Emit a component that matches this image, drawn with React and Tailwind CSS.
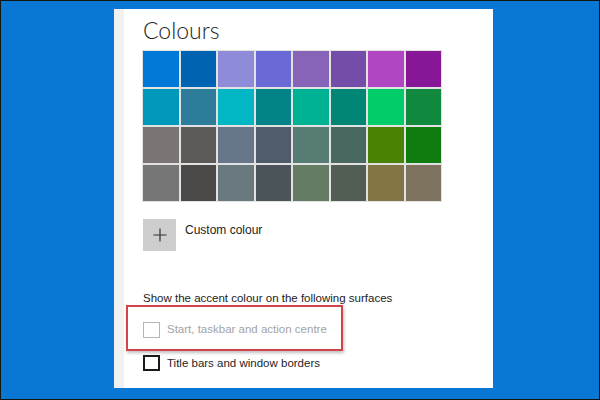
import React from 'react';

const palette = [
  ['#0078D7', '#0063B1', '#8E8CD8', '#6B69D6', '#8764B8', '#744DA9', '#B146C2', '#881798'],
  ['#0099BC', '#2D7D9A', '#00B7C3', '#038387', '#00B294', '#018574', '#00CC6A', '#10893E'],
  ['#7A7574', '#5D5A58', '#68768A', '#515C6B', '#567C73', '#486860', '#498205', '#107C10'],
  ['#767676', '#4C4A48', '#69797E', '#4A5459', '#647C64', '#525E54', '#847545', '#7E735F'],
];

const Checkbox = ({ label, disabled }) => (
  <div className="flex items-center gap-[7px]">
    <div
      className={`w-[17px] h-[16px] ${
        disabled ? 'border border-[#b5b5b5]' : 'border-2 border-[#1a1a1a]'
      }`}
    />
    <span className={`text-[11.5px] ${disabled ? 'text-[#a3a3a3]' : 'text-[#1f1f1f]'}`}>{label}</span>
  </div>
);

export default function App() {
  return (
    <div
      className="w-[600px] h-[400px] bg-[#0878d4] border border-[#141414] overflow-hidden"
      style={{ fontFamily: '"Liberation Sans", Arial, sans-serif' }}
    >
      <div className="ml-[113px] mt-[8px] w-[379px] h-[379px] bg-white flex">
        <div className="w-[10px] bg-[#f1f1f1]" />

        <div className="flex-1 pl-[19px] flex flex-col">
          <h1
            className="mt-[6px] text-[23px] leading-[30px] font-light text-[#1c1c1c]"
            style={{ fontFamily: 'Lato, "Liberation Sans", sans-serif' }}
          >
            Colours
          </h1>

          <div className="mt-[6px] w-[298px] grid grid-cols-8 gap-[2px] bg-white">
            {palette.flat().map((c, i) => (
              <div key={i} className="h-[36px] outline outline-[#e2e2e2]" style={{ backgroundColor: c }} />
            ))}
          </div>

          <div className="mt-[18px] flex items-start gap-[9px]">
            <div className="w-[33px] h-[32px] bg-[#cdcdcd] flex items-center justify-center">
              <svg width="16" height="16" viewBox="0 0 16 16">
                <path d="M8 1.5v13M1.5 8h13" stroke="#333" strokeWidth="1.2" fill="none" />
              </svg>
            </div>
            <span className="mt-[2px] text-[12px] text-[#222]">Custom colour</span>
          </div>

          <p className="mt-[39px] text-[11.5px] text-[#222]">
            Show the accent colour on the following surfaces
          </p>

          <div className="relative mt-[14px]">
            <div className="absolute -left-[17px] -top-[16px] w-[217px] h-[46px] border-2 border-[#d2434c] shadow-[1px_2px_3px_rgba(0,0,0,0.25)]" />
            <Checkbox label="Start, taskbar and action centre" disabled />
          </div>

          <div className="mt-[16px]">
            <Checkbox label="Title bars and window borders" />
          </div>
        </div>
      </div>
    </div>
  );
}
